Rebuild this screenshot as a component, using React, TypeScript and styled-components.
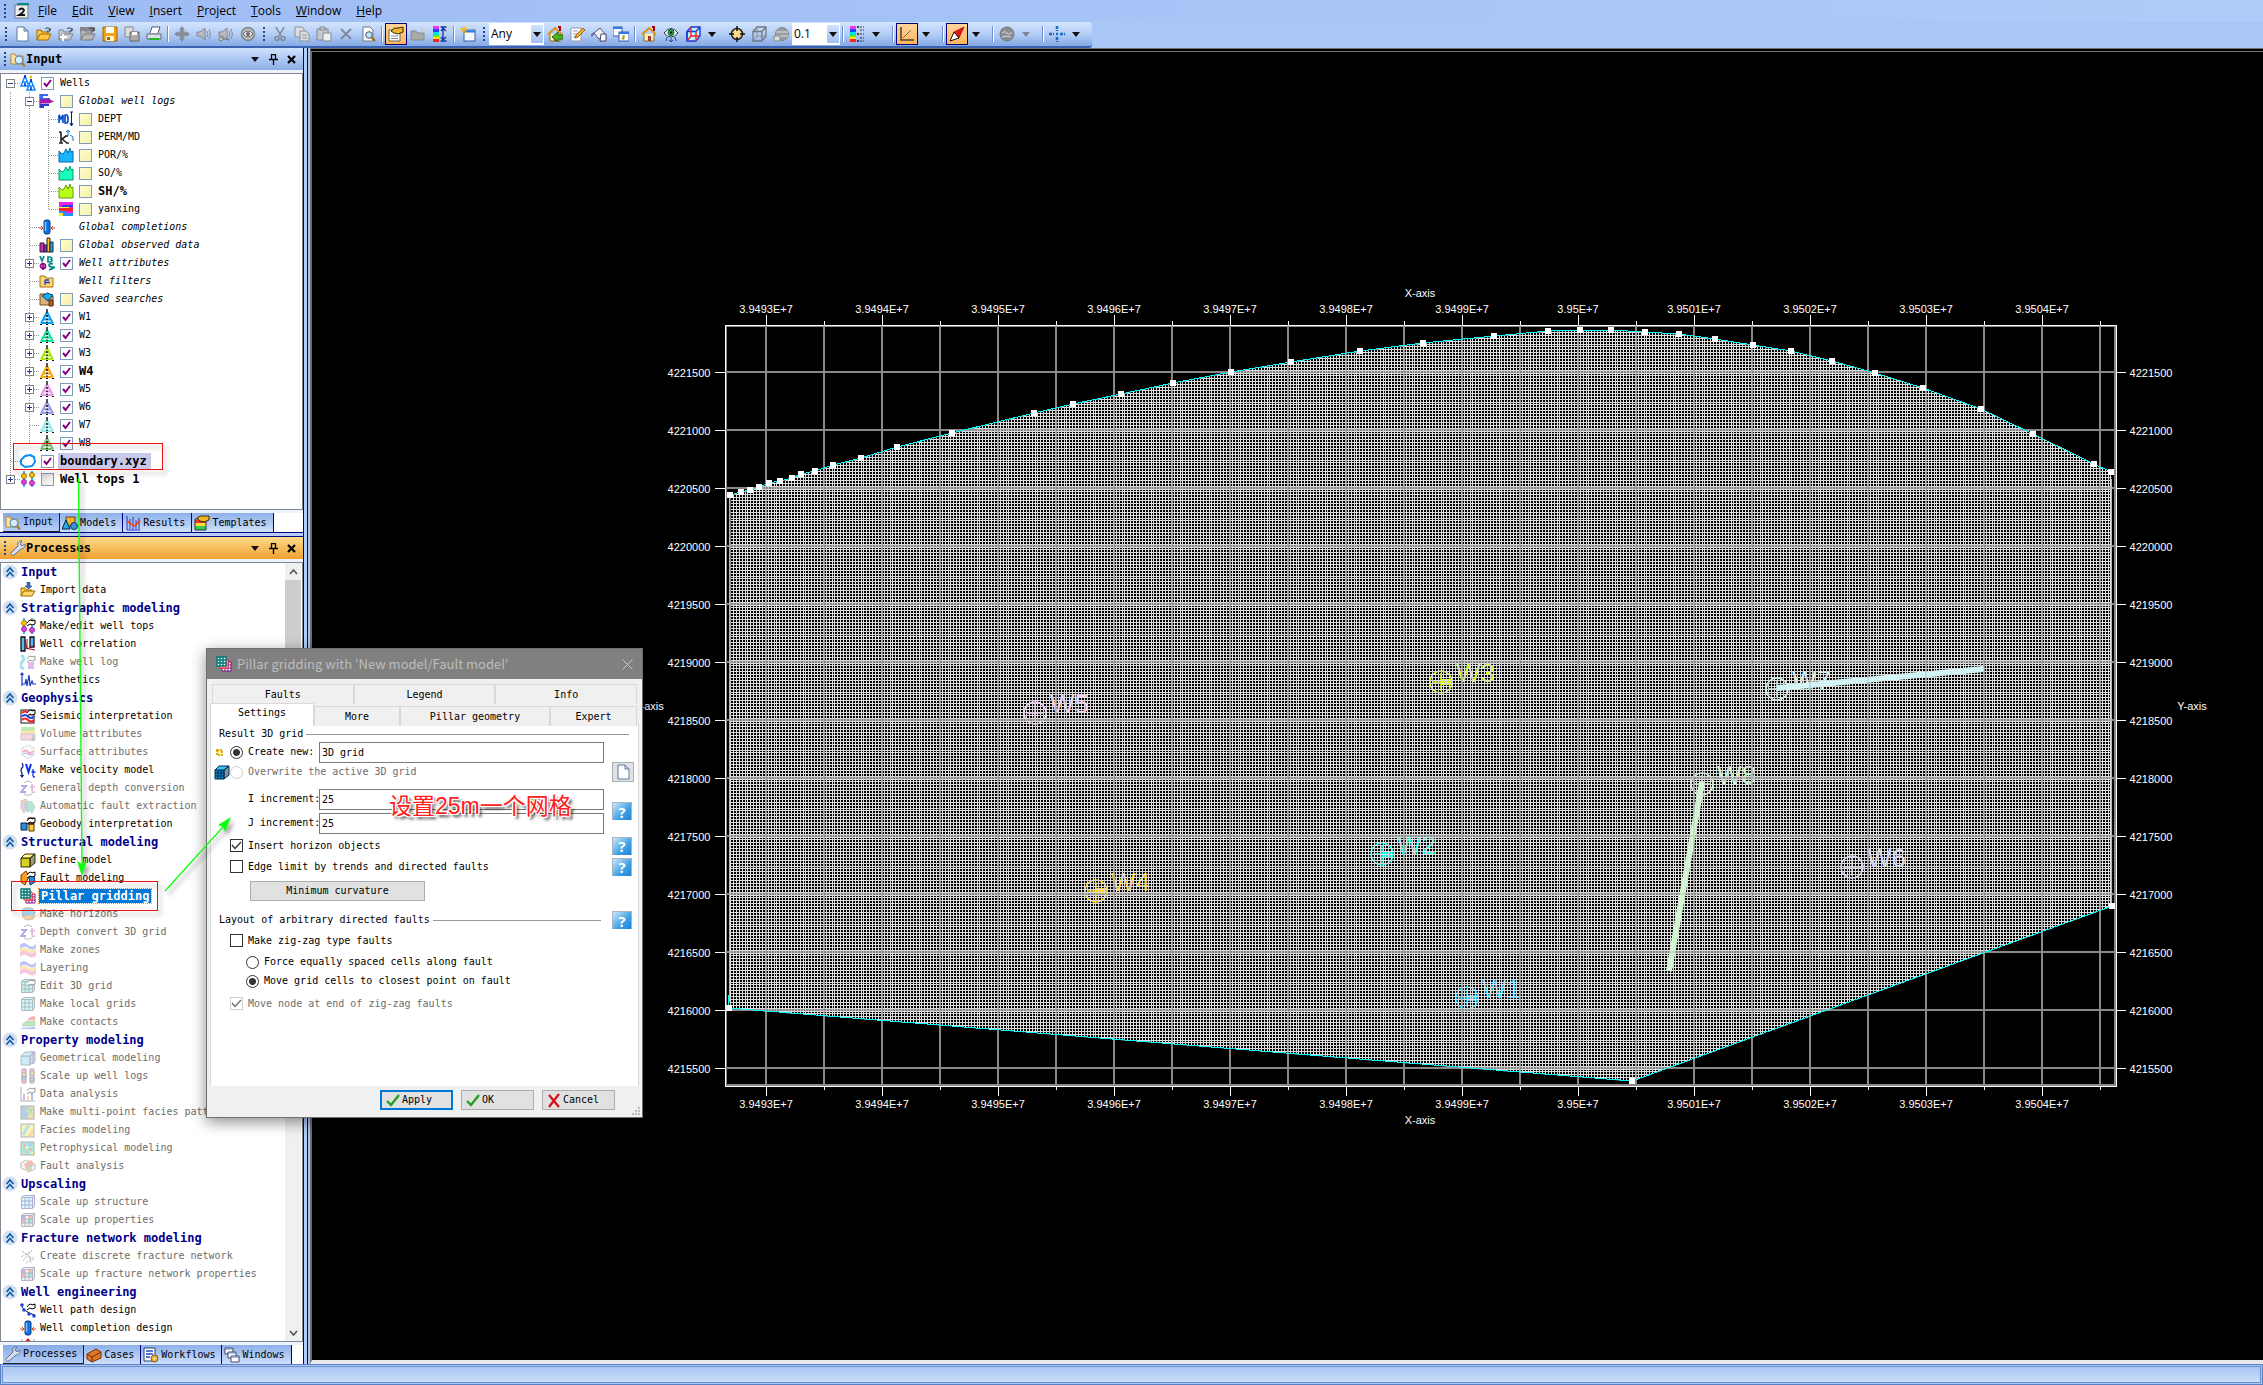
import React from "react";
import styled, { createGlobalStyle, css } from "styled-components";

const MONO = `"DejaVu Sans Mono", "Liberation Mono", monospace`;
const UI = `"Open Sans", "Noto Sans", sans-serif`;

const Global = createGlobalStyle`
  *, *::before, *::after { box-sizing: border-box; }
  body { margin: 0; background: #a9c6f6; font-family: ${MONO}; font-size: 10px; color: #000; }
  button, input, select { font: inherit; color: inherit; margin: 0; padding: 0; }
`;

/* ---------- icons ---------- */

const derrick = (c: string) => (
  <g fill="none" stroke={c} strokeWidth="2">
    <path d="M8 3 2 14.500M8 3l6 11.500M6 7h4M4.500 10.500h7M2.500 14h11" />
    <path d="M8 0v4M8 6v2M8 9.500v1.500M8 12.500v1.500" stroke="#111" strokeWidth="1.400" />
    <path d="M1 15.500h2M7 15.500h2M13 15.500h2" stroke="#111" strokeWidth="1" />
  </g>
);
const curve = (c: string, d: string) => (
  <path d="M1 15V4l3 3 2-1 2-4 2 4 2-5 1 4 2-1v11Z" fill={c} stroke={d} />
);
const folder = (a = "#ffd66b", b = "#a87410") => (
  <path d="M1 14V3h5l1 2h7v9Z" fill={a} stroke={b} />
);
const openFolder = (a: string, b: string) => (
  <>
    <path d="M1 14V4h4l1 2h6v3" fill={a} stroke={b} />
    <path d="m1 14 3-6h11l-3 6Z" fill={a} stroke={b} />
    <path d="M9 3c2-2 4-1 5 1m0-2v3h-3" fill="none" stroke="#333" />
  </>
);
const pins = (
  <g>
    <path d="M4 0v16M12 0v16" stroke="#00a0ff" strokeWidth="1.500" />
    <circle cx="4" cy="5" r="2.600" fill="#ffc400" stroke="#805500" strokeWidth=".6" />
    <circle cx="12" cy="4" r="2.600" fill="#ffc400" stroke="#805500" strokeWidth=".6" />
    <circle cx="4" cy="11" r="2.600" fill="#e040e0" stroke="#701070" strokeWidth=".6" />
    <circle cx="12" cy="12" r="2.600" fill="#e040e0" stroke="#701070" strokeWidth=".6" />
  </g>
);
const hand = <path d="M7 5c1-2 3-3 4-3l1 1 3-1v4l-3 1-2-1-3 2" fill="#fff" stroke="#000" />;
const completion = (
  <>
    <rect x="5" y="1" width="6" height="14" rx="2" fill="#1070e0" stroke="#023a80" />
    <path d="M6.500 3v9" stroke="#7fc4ff" strokeWidth="1.500" />
    <path d="M0 9h4M2 7l2 2-2 2M16 9h-4M14 7l-2 2 2 2" stroke="#e04a10" fill="none" />
  </>
);
const magnifier = (
  <>
    <path d="M1 13V3h4l1 2h7v8Z" fill="#ffe39a" stroke="#b08a3a" />
    <circle cx="9" cy="9" r="3.800" fill="#d4efff" stroke="#6b8fb5" strokeWidth="1.300" />
    <path d="m12 12 3 3.500" stroke="#b0782a" strokeWidth="2" />
  </>
);
const wrench = (
  <path d="M1 13 8 6C7 3 9 0 12 1l-2 3 2 2 3-2c1 3-2 5-4 5l-7 6c-2 1-4-1-3-2Z" fill="#d6e0ee" stroke="#60708a" />
);
const cube = (f: string, s: string, t = f) => (
  <g stroke={s}>
    <path d="M1 6h9v9H1Z" fill={f} />
    <path d="m1 6 4-4h10l-5 4Z" fill={t} />
    <path d="M10 15V6l5-4v9Z" fill={s} fillOpacity=".5" />
  </g>
);
const lattice = (f: string, s: string, many?: boolean) => (
  <g stroke={s} strokeWidth="1">
    <path d="M1.500 3.500h11v11h-11Z" fill={f} />
    <path d="m1.500 3.500 2-2h11v11l-2 2v-11Zm11 0 2-2" fill={f} />
    {many && (
      <g stroke="none">
        <path d="M2 4h3v3H2Z" fill="#8a3be0" /><path d="M6 4h3v3H6Z" fill="#ff9" /><path d="M9 4h3v3H9Z" fill="#f55" />
        <path d="M2 7h3v4H2Z" fill="#f44" /><path d="M6 7h3v4H6Z" fill="#4df" /><path d="M9 7h3v4H9Z" fill="#3c6" />
      </g>
    )}
    <path d="M5 3v11M9 3v11M2 7h11M2 11h11" fill="none" />
  </g>
);
const pillar = (
  <g fill="#fff">
    <path d="M6 6h9v9H6Z" stroke="#80107a" /><path d="M9 6v9M12 6v9M6 9h9M6 12h9" stroke="#80107a" />
    <path d="M4 4h8v8H4Z" stroke="#f22" /><path d="M7 4v8M10 4v8M4 8h8" stroke="#f22" />
    <path d="M1 1h9v9H1Z" stroke="#077" strokeWidth="1.400" /><path d="M4 1v9M7 1v9M1 4h9M1 7h9" stroke="#077" strokeWidth="1.400" />
  </g>
);
const layers = (
  <>
    <path d="M0 3q4-4 8 0t8-1v4q-4 3-8 0T0 7Z" fill="#5570f0" />
    <path d="M0 7q4-3 8 0t8-1v4q-4 3-8 0t-8 0Z" fill="#ffc830" />
    <path d="M0 10q4-3 8 0t8-1v5q-4 3-8 0t-8 1Z" fill="#e878b0" />
  </>
);
const zt = (
  <>
    <path d="M1 6h5l-5 6h5" stroke="#4030c0" strokeWidth="2" fill="none" />
    <path d="M12 4v7q0 2 3 1M10 7h5" stroke="#c040a0" strokeWidth="1.600" fill="none" />
    <path d="M4 3q4-4 8 0M12 14q-4 3-8 0" stroke="#555" fill="none" />
  </>
);
const seismic = (
  <>
    <rect x="1" y="2" width="13" height="13" fill="#fff" stroke="#111" />
    <path d="M2 5q3-3 6 0t6 0M2 12q3-3 6 0t6 0" stroke="#e22" strokeWidth="2" fill="none" />
    <path d="M2 8.500q3-3 6 0t6 0" stroke="#24d" strokeWidth="2" fill="none" />
  </>
);
const fault = (
  <>
    <path d="M1 5 6 1l3 5-4 9-4-3Z" fill="#ff9d20" stroke="#7a3c00" />
    <path d="m9 7 5-3 1 8-5 3Z" fill="#2a8de0" stroke="#023a80" />
    {hand}
  </>
);
const house = (
  <>
    <path d="M3 8v7h10V8" fill="#fff3b0" stroke="#8a6a20" />
    <path d="M1 8.500 8 2l7 6.500" stroke="#e0901a" strokeWidth="2" fill="none" />
    <path d="M11 1h2v4" stroke="#a00" strokeWidth="2" fill="none" /><path d="M7 10h3v5H7Z" fill="#a33" />
  </>
);
const wireCube = (a: string, b: string, f: string) => (
  <g fill="none">
    <path d="M2 5.500 6 1h9v9l-4 5H2Z" fill={f} stroke={a} strokeWidth="1.300" />
    <path d="M2 5.500h9V15M11 5.500 15 1" stroke={a} strokeWidth="1.300" /><path d="M6 1v9h9M6 10l-4 5" stroke={b} />
  </g>
);
const spectrum = (
  <>
    <path d="M1 0h6v3H1Z" fill="#e3e" /><path d="M1 3h6v3H1Z" fill="#24f" /><path d="M1 6h6v3H1Z" fill="#0dd" />
    <path d="M1 9h6v3H1Z" fill="#5e2" /><path d="M1 11h6v2H1Z" fill="#fe0" /><path d="M1 13h6v3H1Z" fill="#f22" />
  </>
);
const speaker = (
  <>
    <path d="M1 6h3l5-4v12l-5-4H1Z" fill="#bbb" stroke="#808890" />
    <path d="M11 5q2 3 0 6M13 3q3 5 0 10" fill="none" stroke="#909090" />
  </>
);

const ICONS: Record<string, React.ReactNode> = {
  app: <><rect x="1" y="2" width="13" height="13" fill="#eee" stroke="#777" /><path d="M3 1h12" stroke="#0a8a8a" strokeWidth="2" /><path d="M5 7q3-3 5 0 0 2-5 5h6" fill="none" stroke="#111" strokeWidth="1.800" /></>,
  newDoc: <path d="M3 1h7l4 4v10H3Z M10 1v4h4" fill="#fff" stroke="#5c7ba5" />,
  open: openFolder("#ffc845", "#a06c00"),
  openGray: <>{openFolder("#c8ccd0", "#7d838a")}<path d="M5 8v7M2 11h7" stroke="#fff" strokeWidth="2" /></>,
  folderDark: <><path d="M0 1h15v4H0Z" fill="#888" />{openFolder("#b8b8b8", "#777")}</>,
  save: <><path d="M1 1h14v14H1Z" fill="#f0a412" stroke="#a86400" /><path d="M4 1h8v6H4Z" fill="#fff" /><path d="M4 10h8v5H4Z" fill="#fff4d0" /><path d="M5 11h3v3H5Z" fill="#a86400" /></>,
  copySave: <><path d="M1 1h8v10H1Z" fill="#ddd" stroke="#888" /><path d="M6 6h9v9H6Z" fill="#aaa" stroke="#666" /><path d="M8 6h5v3H8Z" fill="#fff" /></>,
  print: <><path d="M4 7 6 1h8l-2 6" fill="#fff" stroke="#557" /><path d="M1 8h14v5H1Z" fill="#d8dfe8" stroke="#667" /><path d="M3 13h10" stroke="#2b2" strokeWidth="2" /></>,
  diamond: <path d="m8 0 3 4H9l3 3V5l4 3-4 3V9l-3 3h2l-3 4-3-4h2L4 9v2L0 8l4-3v2l3-3H5Z" fill="#858c96" />,
  speaker,
  speakerKey: <>{speaker}<circle cx="3" cy="13" r="2" fill="#ccc" stroke="#777" /><path d="M5 13h6v2" stroke="#777" fill="none" /></>,
  target2: <><circle cx="8" cy="8" r="6.500" fill="#bbb" stroke="#808890" strokeWidth="1.500" /><path d="M3 8q5-6 10 0-5 6-10 0Z" fill="#eee" stroke="#666" /><circle cx="8" cy="8" r="2" fill="#666" /></>,
  cut: <g stroke="#7d8894" fill="none" strokeWidth="1.500"><path d="m4 1 5 9M12 1 7 10" /><circle cx="5" cy="12.500" r="2" /><circle cx="11" cy="12.500" r="2" /></g>,
  copy: <g fill="#ddd" stroke="#8a929c"><path d="M1 1h7l2 2v8H1Z" /><path d="M6 5h6l3 3v7H6Z" /><path d="M8 9h5M8 12h5" /></g>,
  paste: <g fill="#c4c8cc" stroke="#808890"><path d="M1 3h11v11H1Z" /><path d="M4 1h5v3H4Z" /><path d="M7 7h8v8H7Z" fill="#eee" /></g>,
  del: <path d="m3 3 10 10M13 3 3 13" stroke="#7d8894" strokeWidth="1.800" />,
  preview: <><path d="M3 1h7l3 3v11H3Z" fill="#fff" stroke="#778" /><circle cx="9" cy="9" r="3.300" fill="#bde4ff" stroke="#456" /><path d="m11 11 4 4" stroke="#a60" strokeWidth="2" /></>,
  inspect: <><path d="M1 4h11v11H1Z" fill="#fff" stroke="#665" /><path d="M3 10h7M3 12.500h7" stroke="#889" /><path d="M3 5q3-4 7-3l5-1v5l-5 2-4-1Z" fill="#f0b429" stroke="#3a2b00" /></>,
  folderStar: <><path d="M1 14V5h5l1 2h7v7Z" fill="#aaa" stroke="#888" /><path d="M10 4h6M13 1v6M11 2l4 4M15 2l-4 4" stroke="#ccc" /></>,
  spectrumI: <>{spectrum}<path d="M11 2v12M8.500 1h6M8.500 15h6M9 5l2-3 3 3M9 11l2 3 3-3" fill="none" stroke="#1238a0" strokeWidth="1.300" /></>,
  windowStar: <><rect x="4" y="4" width="11" height="11" fill="#f4f8ff" stroke="#2f5ea8" /><path d="M4 5.500h11" stroke="#2f7ae0" strokeWidth="2" /><path d="M0 3.500h8M4 0v8M1 1l6 6M7 1 1 7" stroke="#f8b400" /></>,
  homeArrow: <>{house}<path d="M16 9h-5V6l-6 5 6 5v-3h5Z" fill="#4bb522" stroke="#1d6b00" /></>,
  edit: <><path d="M2 2h10v13H2Z" fill="#fff" stroke="#99a" /><path d="M4 5h5M4 8h5M4 11h5" stroke="#99c" /><path d="m6 12 1-3 7-7 2 2-7 7Z" fill="#f0b030" stroke="#803c00" strokeWidth=".7" /></>,
  bucket: <><path d="m3 7 6-5 5 6-6 5Z" fill="#eef3fa" stroke="#557" /><path d="M3 7 0 10" stroke="#66a" strokeWidth="2" /><path d="M10 8h5v7h-6Z" fill="#fff" stroke="#446" /></>,
  windows2: <><rect x="0" y="1" width="9" height="9" fill="#fff" stroke="#2f5ea8" /><path d="M0 2h9" stroke="#2f7ae0" strokeWidth="2" /><rect x="6" y="6" width="10" height="9" fill="#fff" stroke="#2f5ea8" /><path d="M6 7h10" stroke="#2f7ae0" strokeWidth="2" /><path d="M11 9v4h-2Z" fill="#dd0" stroke="#990" /></>,
  home: house,
  eye: <><path d="M1 7q7-9 14 0-7 8-14 0Z" fill="#fff" stroke="#333" /><circle cx="8" cy="6.500" r="3" fill="#2a9a4a" stroke="#063" /><circle cx="8" cy="6.500" r="1" /><path d="m4 11-1 4M8 12v4m-2-2 2 2 2-2M12 11l1 4" stroke="#2246a8" fill="none" /></>,
  cubeRB: (
    <g fill="none" strokeWidth="1.400">
      <path d="M2 5.500 6 1h9v9l-4 5H2Z" fill="#bff4ff" stroke="#1a35d8" />
      <path d="M2 5.500h9M11 5.500 15 1M2 5.500V15" stroke="#1a35d8" /><path d="M11 5.500V15M6 1v9h9M6 10l-4 5" stroke="#e22" />
    </g>
  ),
  cubeGray: wireCube("#707880", "#888", "none"),
  target: <><circle cx="8" cy="8" r="5.500" fill="#fbd98a" stroke="#222" strokeWidth="1.500" /><path d="M8 0v5M8 11v5M0 8h5M11 8h5" stroke="#111" strokeWidth="1.500" /></>,
  sphereLock: <><circle cx="9" cy="8" r="6.500" fill="#9a9ea4" stroke="#788" /><path d="M3 6h12M3 10h12" stroke="#ddd" /><path d="M1 10h6v5H1Z" fill="#ddd" stroke="#888" /></>,
  legend: <>{spectrum}<path d="M8 1h2M8 8h2M8 15h2" stroke="#111" strokeWidth="1.500" /><path d="M11 1h4M11 4h4M11 8h4M11 12h4M11 15h4" stroke="#333" strokeDasharray="2 1" /></>,
  axes: <><path d="M2 1v13h13" fill="none" stroke="#443" strokeWidth="1.500" /><path d="m4 12 8-8M5 13v2M8 13v2M11 13v2M14 13v2" stroke="#765" /></>,
  compass: <><path d="M15 1 10 12 5 6Z" fill="#e11" stroke="#700" strokeWidth=".6" /><path d="M5 6 1 15l9-3Z" fill="#fff" stroke="#111" /></>,
  ball: <><circle cx="8" cy="8" r="7" fill="#8a8e92" stroke="#777" /><path d="M3 7q3-3 5 0t5-1M3 11q4-2 9 0" stroke="#ddd" fill="none" /></>,
  cross: <path d="M8 0v5M8 11v5M0 8h5M11 8h5M7 8h2" stroke="#1a6ac8" strokeWidth="2.500" strokeDasharray="3 1" />,
  magnifier,
  wrench,
  wells: <g fill="none" stroke="#0a8cff" strokeWidth="1.500"><path d="M5 1 1 11h8ZM3 7h4M11 5 7 15h8ZM9 11h4" /><path d="M5 0v3M11 4v3M5 8v3M11 12v3" stroke="#0020c0" /><circle cx="11" cy="2" r="1.300" fill="#ffb000" stroke="none" /></g>,
  logs: <><path d="M1 1v14" stroke="#222" /><path d="M1 1h8v2h-5v2h7v3H1Z" fill="#3b6af0" /><path d="M1 6h9l5 2.500-5 2H1Z" fill="#a01ab0" /><path d="M1 11h9v2H5v2H1Z" fill="#2a3cc8" /></>,
  md: <><path d="M1 12V4l2 4 2-4v8M7 4v8h2l1-2V6L9 4Z" fill="none" stroke="#0a50c8" strokeWidth="1.700" /><path d="M13.500 1v14M12 1h3M12 12l1.500 3 1.500-3" stroke="#021c80" fill="none" /></>,
  perm: <><path d="M3 3v11M1 3h2M1 14h4M8 7 4 10l5 4M7 7h3M8 14h3" fill="none" stroke="#222" strokeWidth="1.600" /><path d="M10 7V1M8 3l2-2 2 2M12 6l3 2v4" fill="none" stroke="#0a70c8" /></>,
  por: curve("#18b4ff", "#0868a0"),
  so: curve("#18ffc0", "#089868"),
  sh: curve("#b8ff18", "#6a9808"),
  facies: <><rect x="1" y="1" width="14" height="14" fill="#f020e0" /><path d="M1 7h14v3H1Z" fill="#f22" /><path d="M1 10h6v2h8v3H1Z" fill="#2a90f8" /><path d="M4 4h11v2H4Z" fill="#2a40e8" /><path d="M1 6h10v1H1ZM1 12h4v3H1Z" fill="#fe3" /></>,
  completion,
  bars: <g stroke="#222"><path d="M1 6h4v9H1Z" fill="#e020c0" /><path d="M5 8h3v7H5Z" fill="#7a2ae0" /><path d="M8 1h3v14H8Z" fill="#ffc020" /><path d="M11 5h3v10h-3Z" fill="#20a0ff" /></g>,
  attrs: <g fill="none" strokeWidth="1.700"><path d="m1 1 2 5 2-5M9 2v5h3q2-2 0-2.500Q14 3 11 2Z" stroke="#088" /><circle cx="4" cy="11" r="2.500" stroke="#808" /><path d="M4 8v7" stroke="#808" /><path d="M14 9q-4-1-4 1t4 2-4 3" stroke="#088" /></g>,
  filter: <>{folder()}<path d="M6 7v5M6 7h4M6 9.500h5" stroke="#2040d0" fill="none" strokeWidth="1.300" /></>,
  search: <>{folder("#d9b27a", "#7a4a10")}<path d="m3 5 5-3 6 2-5 6Z" fill="#18a8f0" stroke="#046" /><path d="M10 9h4v6h-4Z" fill="#b06020" stroke="#532" /></>,
  d1: derrick("#08a0f0"), d2: derrick("#08e0a0"), d3: derrick("#a8e808"), d4: derrick("#f8a808"),
  d5: derrick("#e898e8"), d6: derrick("#9898e8"), d7: derrick("#90e8e8"), d8: derrick("#78c878"),
  polygon: <path d="M5 3 10 2l4 2 1 5-3 4-7 1-4-3V7Z" fill="#fff" stroke="#0a90f0" strokeWidth="2" strokeLinejoin="round" />,
  pins,
  models: <><path d="M4 2h9v9H4Z" fill="#f0b429" stroke="#543" /><path d="m4 5 4 9H0Z" fill="#28b0e8" stroke="#024" /><circle cx="12" cy="11" r="3.500" fill="#3a8fe0" stroke="#136" /></>,
  results: <><path d="M2 1v14h13M5 4v10M8 2v12M11 5v9M14 3v11" stroke="#1a30c0" fill="none" /><path d="m2 6 4 3 4 2 5-6" stroke="#f04a10" strokeWidth="1.800" fill="none" /></>,
  templates: <><path d="M1 5h11v3H1Z" fill="#e33" /><path d="M1 8h11v3H1Z" fill="#fd3" /><path d="M1 11h11v4H1Z" fill="#3c5" /><path d="M1 4h11v11H1Z" fill="none" stroke="#333" /><path d="M3 3q4-3 7-2l5 0v4l-5 2-4-1Z" fill="#f0b429" stroke="#3a2b00" /></>,
  importI: <><path d="M1 14V6h4l1 2h6v2" fill="#ffc845" stroke="#a06c00" /><path d="m1 14 3-5h11l-3 5Z" fill="#ffd66b" stroke="#a06c00" /><path d="M7 0h3v4h2L8.500 7 5 4h2Z" fill="#3a70d8" stroke="#134" strokeWidth=".5" /></>,
  wellTops: <>{pins}{hand}</>,
  correlation: <g fill="none"><path d="M1 1h4v14H1ZM10 1h4v10h-4Z" fill="#58b8f8" stroke="#111" strokeWidth="1.300" /><path d="m5 4 2 9 8-4M5 12l10 2M7 3v9" stroke="#a01020" /></g>,
  wellLog: <><path d="M1 1q5 3 1 7t2 7" stroke="#20b8d8" strokeWidth="3" fill="none" /><path d="M8 8h6v7H8Z" fill="#c050d0" />{hand}</>,
  synth: <path d="M2 1v13m-1.500-11L2 1l1.500 2M2 12h3l1-5 1 7 2-11 1 11 2-5 1 3h3" fill="none" stroke="#1a38c0" strokeWidth="1.200" />,
  seismic: <>{seismic}{hand}</>,
  volume: <><path d="M1 1h14v4H1Z" fill="#6c4" /><path d="M1 5h14v3H1Z" fill="#fb3" /><path d="M1 8h14v6H1Z" fill="#e8a0b8" stroke="#778" /><path d="M13 9v6m-2-2 2 2 2-2" stroke="#444" fill="none" /></>,
  surface: <><path d="m8 1 6 3v7l-6 4-6-4V4Z" fill="#eee" stroke="#777" strokeDasharray="2 1" /><path d="M3 8q3-3 5 0t5-1" stroke="#e34" strokeWidth="2" fill="none" /><path d="M3 10q3-2 5 0t5 0" stroke="#44e" fill="none" /></>,
  velocity: <><path d="M2 1q2 3 0 5t0 5v4m-1.500-2L2 15l1.500-2" stroke="#021c80" fill="none" strokeWidth="1.200" /><path d="m6 2 2.500 8L11 2" stroke="#1030f0" strokeWidth="2" fill="none" /><path d="M13 7v7q0 1 2 1M11.500 10h4" stroke="#1030f0" strokeWidth="1.300" fill="none" /></>,
  zt,
  autoFault: <><path d="M1 3 6 1l2 8-4 6-3-5Z" fill="#f08a60" stroke="#877" /><path d="m7 3 5 1 3 5-3 6-5-4Z" fill="#40c890" stroke="#688" /><path d="m4 5 4 9" stroke="#38f" strokeWidth="2" /></>,
  geobody: <><path d="M1 7h6v7H1Z" fill="#2a8de0" stroke="#024" /><path d="M9 8h5v7H9Z" fill="#fc3" stroke="#530" /><path d="M8 2h6v6H8Z" fill="#a04a10" stroke="#310" />{hand}</>,
  define: cube("#d8d020", "#333300", "#fff890"),
  fault,
  pillar,
  horizons: <><path d="M2 4q4-4 11-1l2 4-4 4-8-1Z" fill="#38a8e0" stroke="#356" /><path d="m2 10 4 4 7-1 2-4" fill="#f0a030" stroke="#853" /></>,
  layers,
  editGrid: <>{lattice("#6fe0d0", "#356")}{hand}</>,
  localGrid: lattice("#90f0f0", "#356"),
  contacts: <><path d="m1 14 14-1v2H1Z" fill="#46e" /><path d="M3 10q2-3 5-3h7v5H2Z" fill="#5c5" stroke="#353" strokeWidth=".5" /><path d="M7 6q3-4 8-4v4Z" fill="#e44" /></>,
  geom: <>{cube("#7fd0ff", "#456")}<path d="M13 2v11M11 2h4M11 13h4" stroke="#24a" /></>,
  scaleLogs: <g stroke="#444"><path d="M2 1h4v14H2ZM10 1h4v14h-4Z" fill="#f5b" /><path d="M2 5h4v3H2ZM10 4h4v3h-4Z" fill="#fc3" /><path d="M2 9h4v3H2ZM10 10h4v3h-4Z" fill="#3af" /></g>,
  analysis: <><path d="M1 1v14h14" stroke="#333" fill="none" /><path d="M3 8h2v6H3Z" fill="#c3c" /><path d="M7 10h2v4H7Z" fill="#fa2" /><path d="M11 7h2v7h-2Z" fill="#36e" />{hand}</>,
  multi: <><rect x="1" y="2" width="13" height="13" fill="#c8b040" stroke="#333" /><path d="M2 3h7l-3 4 3 3-2 4H2Z" fill="#48c" /><path d="m8 4 5 1-3 5Z" fill="#3a4" /></>,
  faciesM: <><rect x="1" y="2" width="13" height="13" fill="#f8e040" stroke="#444" /><path d="m2 12 5-9h3L4 14Z" fill="#30b8f0" /><path d="m8 14 6-9v5l-3 4Z" fill="#f09030" /></>,
  petro: <><rect x="1" y="2" width="13" height="13" fill="#3ad0a0" stroke="#444" /><path d="M3 4h3v3H3ZM9 8h3v3H9ZM5 11h3v2H5Z" fill="#f44" /><path d="M8 3h4v3H8ZM3 8h3v2H3Z" fill="#48f" /><path d="M6 6h2v3H6ZM11 12h2v2h-2Z" fill="#fe3" /></>,
  faultA: <><path d="m1 5 5-3 4 2v5l-5 3-4-2Z" fill="#eee" stroke="#555" /><path d="m4 6 7-4 3 3-6 10-2-3Z" fill="#e55" /><path d="m8 9 4-3 2 3-5 6Z" fill="#5b5" /><path d="m11 8 4-2v5l-4 2Z" fill="#ddf" stroke="#666" /></>,
  upStruct: lattice("#a8f0ff", "#3a3aa0"),
  upProps: lattice("#ddd", "#446", true),
  dfn: <path d="m2 3 12 9M3 13 12 2M1 9l9-5M6 15l8-6M9 8l2 7" stroke="#555" strokeDasharray="3 1" fill="none" />,
  path: <><path d="M1 2q2 8 14 11" fill="none" stroke="#111" /><circle cx="2" cy="3" r="1.800" fill="#24e" /><circle cx="4" cy="8" r="1.800" fill="#24e" /><circle cx="9" cy="12" r="1.800" fill="#24e" /><circle cx="14" cy="14" r="1.800" fill="#24e" />{hand}</>,
  modify: <><path d="m8 0 5 6H3Z" fill="#e11" /><path d="M2 1v14M14 1v14" stroke="#999" strokeDasharray="2 2" /><path d="M8 6v9" stroke="#e11" strokeWidth="3" /></>,
  cases: <><path d="m1 7 9-5 5 3v6l-9 4-5-3Z" fill="#e0762a" stroke="#733000" /><path d="m1 7 5 3 9-5M6 10v5" stroke="#733000" fill="none" /></>,
  workflows: <><path d="M1 1h11v13H1Z" fill="#fff" stroke="#246" /><path d="M3 4h7M3 7h7M3 10h4" stroke="#24c" strokeWidth="1.500" /><circle cx="11.500" cy="11.500" r="3.500" fill="#f0b429" stroke="#754" /><circle cx="11.500" cy="11.500" r="1" fill="#fff" /></>,
  windows: <g fill="#fff" stroke="#446"><path d="M1 1h8v6H1Z" /><path d="M4 5h8v6H4Z" /><path d="M7 9h8v6H7Z" /><path d="M1 2h8M4 6h8M7 10h8" stroke="#58c" /></g>,
  spark: <path d="M3 6h5v5H3Z" fill="#fff2a0" stroke="#e0a810" strokeWidth="2" strokeDasharray="2 1" />,
  gridCube: <>{cube("#0890d8", "#022a48", "#30c8ff")}<path d="M4 6v9M7 6v9M1 9h9M1 12h9" stroke="#022a48" /></>,
  ok: <path d="m2 9 4 4 8-10" fill="none" stroke="#22a01f" strokeWidth="2.400" />,
  no: <path d="m3 3 10 12M13 2 3 15" fill="none" stroke="#d8101c" strokeWidth="2.200" />,
};

const IconSvg = styled.svg<{ $dim?: boolean }>`
  display: block;
  flex: none;
  width: 16px;
  height: 16px;
  opacity: ${(p) => (p.$dim ? 0.4 : 1)};
`;
const Icon = ({ name, dim }: { name: string; dim?: boolean }) => (
  <IconSvg viewBox="0 0 16 16" $dim={dim} aria-hidden="true">{ICONS[name]}</IconSvg>
);

/* ---------- shell ---------- */

const Shell = styled.div`
  position: relative;
  display: grid;
  grid-template-rows: auto auto 1fr auto;
  height: 100vh;
  overflow: hidden;
`;
const MenuBar = styled.nav`
  display: flex;
  align-items: center;
  height: 22px;
  padding-left: 3px;
  gap: 8px;
  background: linear-gradient(90deg, #9ebcf4, #aecbf9);
  font: 12px/22px ${UI};
`;
const MenuList = styled.div`
  display: flex;
  gap: 15px;
`;
const MenuItem = styled.button`
  border: 0;
  background: none;
  &::first-letter { text-decoration: underline; }
`;
const Grip = styled.span<{ $w?: number }>`
  flex: none;
  width: ${(p) => p.$w || 3}px;
  height: 16px;
  background: repeating-linear-gradient(#27448c 0 2px, transparent 2px 4px) no-repeat center / 2px 15px;
`;
const ToolStrip = styled.div`
  display: flex;
  background: #a9c6f6;
`;
const ToolBar = styled.div`
  display: flex;
  align-items: center;
  height: 26px;
  padding-right: 2px;
  background: linear-gradient(#d3e5fd, #b4cef6 50%, #84a9e4);
  border-bottom: 2px solid #3a62b0;
  border-radius: 0 3px 3px 0;
`;
const ToolButton = styled.button<{ $on?: boolean }>`
  display: grid;
  place-items: center;
  flex: none;
  width: 22px;
  height: 22px;
  border: 1px solid ${(p) => (p.$on ? "#000080" : "transparent")};
  background: ${(p) => (p.$on ? "linear-gradient(#ffd49a, #ffb45c)" : "none")};
`;
const Separator = styled.span`
  flex: none;
  width: 6px;
  height: 16px;
  background: linear-gradient(90deg, #6f8fd0 50%, #fff 50%) no-repeat 2px 0 / 2px 16px;
`;
const DropButton = styled.button`
  display: grid;
  place-items: center;
  flex: none;
  width: 22px;
  height: 22px;
  padding-right: 6px;
  border: 0;
  background: none;
`;
const SelectBox = styled.span<{ $w: number }>`
  display: grid;
  grid-template-columns: 1fr 14px;
  align-items: center;
  width: ${(p) => p.$w}px;
  height: 22px;
  background: linear-gradient(#cfe1fb, #a3c0f0) no-repeat right 1px center / 12px 18px, #fff;
  font: 12px/20px ${UI};
  select {
    grid-area: 1 / 1 / 2 / 3;
    width: 100%;
    height: 22px;
    padding-left: 2px;
    border: 0;
    background: none;
    appearance: none;
  }
  svg { grid-area: 1 / 2; justify-self: center; pointer-events: none; }
`;
const Caret = ({ dim }: { dim?: boolean }) => (
  <svg width="8" height="5" aria-hidden="true"><path d="M0 0h8L4 5Z" fill={dim ? "#7b8797" : "#111"} /></svg>
);

const Body = styled.div`
  display: grid;
  grid-template-columns: 303px 7px minmax(0, 1fr);
  min-height: 0;
`;
const Dock = styled.aside`
  display: grid;
  grid-template-rows: 484fr 5px 827fr;
  min-height: 0;
  background: #eef2fa;
`;
const Splitter = styled.div<{ $v?: boolean }>`
  background: #b6cdf8;
  border: 1px solid #000080;
  ${(p) => (p.$v
    ? css`border-width: 0 1px; margin-right: 2px;`
    : css`border-width: 1px 0;`)}
`;
const Panel = styled.section`
  display: flex;
  flex-direction: column;
  min-height: 0;
`;
const PanelHead = styled.header<{ $active?: boolean }>`
  display: flex;
  align-items: center;
  flex: none;
  height: 22px;
  padding: 0 3px;
  background: ${(p) => (p.$active ? "linear-gradient(#fddc8c, #f0a030)" : "linear-gradient(#d0e2fc, #8aaee8)")};
`;
const PanelTitle = styled.h2`
  flex: 1;
  margin: 0;
  font: bold 12px/20px ${MONO};
`;
const PanelIcon = styled.span`
  margin-left: 4px;
`;
const HeadButton = styled.button`
  display: grid;
  place-items: center;
  width: 18px;
  height: 18px;
  border: 0;
  background: none;
`;
const Well = styled.div`
  display: flex;
  flex: 1;
  min-height: 0;
  margin: 3px 0;
  overflow: hidden;
  background: #fff;
  border: 1px solid #808590;
`;
const TabRow = styled.div`
  display: flex;
  flex: none;
  height: 19px;
  padding-left: 3px;
  background: #fff;
`;
const DockTab = styled.button<{ $on?: boolean }>`
  display: flex;
  align-items: center;
  gap: 2px;
  padding: 0 6px 0 2px;
  border: 0 solid ${(p) => (p.$on ? "#222" : "#000080")};
  border-width: 0 1px ${(p) => (p.$on ? "1px" : "0")} 0;
  background: linear-gradient(${(p) => (p.$on ? "#86aae6, #b4cef8" : "#8db0ea, #cfe1fc")});
  line-height: 18px;
`;

/* ---------- input tree ---------- */

const Tree = styled.div`
  flex: 1;
`;
const TreeRow = styled.div`
  display: flex;
  align-items: center;
  height: 18px;
  line-height: 18px;
`;
const DOT_V = "repeating-linear-gradient(#999 0 1px, transparent 1px 2px)";
const DOT_H = "repeating-linear-gradient(90deg, #999 0 1px, transparent 1px 2px)";
const Guide = styled.span<{ $line: "full" | "half" | "none"; $join?: boolean }>`
  display: grid;
  place-items: center;
  flex: none;
  width: 19px;
  height: 18px;
  background:
    ${DOT_V} no-repeat 9px 0 / 1px ${(p) => (p.$line === "full" ? 18 : p.$line === "half" ? 9 : 0)}px,
    ${DOT_H} no-repeat 10px 9px / ${(p) => (p.$join ? 9 : 0)}px 1px;
`;
const Expander = styled.button`
  display: block;
  width: 9px;
  height: 9px;
  border: 0;
  background: none;
  svg { display: block; }
`;
const TreeCheck = styled.input<{ $tone: "gray" | "yellow" }>`
  appearance: none;
  flex: none;
  width: 13px;
  height: 13px;
  margin-left: 5px;
  border: 1px solid #7f9db9;
  background: ${(p) => (p.$tone === "yellow" ? "linear-gradient(135deg, #fffcd0, #f6f0a8)" : "linear-gradient(135deg, #dcdcdc, #f8f8f8)")};
  &:checked {
    background-image: url("data:image/svg+xml,%3Csvg xmlns='http://www.w3.org/2000/svg' viewBox='0 0 11 11'%3E%3Cpath d='M2 5l2.500 3L9 2' fill='none' stroke='%23800080' stroke-width='2'/%3E%3C/svg%3E");
  }
`;
const NoCheck = styled.span`
  flex: none;
  width: 18px;
`;
const TreeText = styled.label<{ $style?: string; $sel?: boolean }>`
  margin-left: 4px;
  padding: 0 ${(p) => (p.$sel ? 4 : 1)}px 0 2px;
  line-height: 16px;
  white-space: nowrap;
  ${(p) => p.$style === "i" && css`font-style: italic;`}
  ${(p) => p.$style === "b" && css`font-weight: bold; font-size: 12px;`}
  ${(p) => p.$sel && css`background: #c8c8ea;`}
`;

type Node = { t: string; l: number; i: string; c?: "on" | "off" | "yoff" | "yon"; s?: string; x?: "+" | "-"; last?: boolean; sel?: boolean };
const NODES: Node[] = [
  { t: "Wells", l: 0, i: "wells", c: "on", x: "-" },
  { t: "Global well logs", l: 1, i: "logs", c: "yoff", s: "i", x: "-" },
  { t: "DEPT", l: 2, i: "md", c: "yoff" },
  { t: "PERM/MD", l: 2, i: "perm", c: "yoff" },
  { t: "POR/%", l: 2, i: "por", c: "yoff" },
  { t: "SO/%", l: 2, i: "so", c: "yoff" },
  { t: "SH/%", l: 2, i: "sh", c: "yoff", s: "b" },
  { t: "yanxing", l: 2, i: "facies", c: "yoff", last: true },
  { t: "Global completions", l: 1, i: "completion", s: "i" },
  { t: "Global observed data", l: 1, i: "bars", c: "yoff", s: "i" },
  { t: "Well attributes", l: 1, i: "attrs", c: "yon", s: "i", x: "+" },
  { t: "Well filters", l: 1, i: "filter", s: "i" },
  { t: "Saved searches", l: 1, i: "search", c: "yoff", s: "i" },
  { t: "W1", l: 1, i: "d1", c: "on", x: "+" },
  { t: "W2", l: 1, i: "d2", c: "on", x: "+" },
  { t: "W3", l: 1, i: "d3", c: "on", x: "+" },
  { t: "W4", l: 1, i: "d4", c: "on", x: "+", s: "b" },
  { t: "W5", l: 1, i: "d5", c: "on", x: "+" },
  { t: "W6", l: 1, i: "d6", c: "on", x: "+" },
  { t: "W7", l: 1, i: "d7", c: "on" },
  { t: "W8", l: 1, i: "d8", c: "on", last: true },
  { t: "boundary.xyz", l: 0, i: "polygon", c: "on", s: "b", sel: true },
  { t: "Well tops 1", l: 0, i: "pins", c: "off", s: "b", x: "+", last: true },
];

const TreeItem = ({ n, first }: { n: Node; first: boolean }) => {
  const id = "node-" + n.t.replace(/\W/g, "-");
  return (
    <TreeRow>
      {Array.from({ length: n.l }, (_, k) => <Guide key={k} $line="full" />)}
      <Guide $line={first ? "none" : n.last ? "half" : "full"} $join>
        {n.x && (
          <Expander aria-label={n.x === "+" ? "Expand" : "Collapse"}>
            <svg width="9" height="9">
              <rect x=".5" y=".5" width="8" height="8" fill="#fff" stroke="#848484" />
              <path d={n.x === "+" ? "M2 4.500h5M4.500 2v5" : "M2 4.500h5"} stroke="#203c88" />
            </svg>
          </Expander>
        )}
      </Guide>
      <Icon name={n.i} />
      {n.c ? <TreeCheck id={id} type="checkbox" defaultChecked={n.c === "on" || n.c === "yon"} $tone={n.c[0] === "y" ? "yellow" : "gray"} /> : <NoCheck />}
      <TreeText as={n.c ? "label" : "span"} htmlFor={n.c ? id : undefined} $style={n.s} $sel={n.sel}>{n.t}</TreeText>
    </TreeRow>
  );
};

/* ---------- processes ---------- */

const ProcList = styled.div`
  flex: 1;
  min-width: 0;
  overflow: hidden;
`;
const GroupRow = styled.button`
  display: flex;
  align-items: center;
  gap: 3px;
  width: 100%;
  height: 18px;
  padding-left: 1px;
  border: 0;
  background: none;
  color: #00008b;
  font: bold 12px/18px ${MONO};
`;
const ProcRow = styled.button<{ $dim?: boolean; $sel?: boolean }>`
  display: flex;
  align-items: center;
  gap: 3px;
  width: 100%;
  height: 18px;
  padding-left: 19px;
  border: 0;
  background: none;
  line-height: 16px;
  white-space: nowrap;
  color: ${(p) => (p.$dim ? "#6d6d6d" : "#000")};
  span { padding: 0 1px; }
  ${(p) => p.$sel && css`
    font-weight: bold;
    font-size: 12px;
    span { padding: 0 2px; line-height: 14px; color: #fff; background: #0078d7; outline: 1px dotted #ff8728; }
  `}
`;
const ScrollTrack = styled.div`
  display: grid;
  grid-template-rows: 17px 1fr 17px;
  flex: none;
  width: 16px;
  margin-right: 1px;
  background: #f0f0f0;
`;
const ScrollArrow = styled.button`
  display: grid;
  place-items: center;
  border: 0;
  background: none;
`;
const ScrollThumb = styled.div`
  height: 68%;
  background: #cdcdcd;
`;

const PROCS: [string, string?, string?][] = [
  ["Input"], ["Import data", "importI"],
  ["Stratigraphic modeling"], ["Make/edit well tops", "wellTops"], ["Well correlation", "correlation"], ["Make well log", "wellLog", "d"], ["Synthetics", "synth"],
  ["Geophysics"], ["Seismic interpretation", "seismic"], ["Volume attributes", "volume", "d"], ["Surface attributes", "surface", "d"], ["Make velocity model", "velocity"], ["General depth conversion", "zt", "d"], ["Automatic fault extraction", "autoFault", "d"], ["Geobody interpretation", "geobody"],
  ["Structural modeling"], ["Define model", "define"], ["Fault modeling", "fault"], ["Pillar gridding", "pillar", "s"], ["Make horizons", "horizons", "d"], ["Depth convert 3D grid", "zt", "d"], ["Make zones", "layers", "d"], ["Layering", "layers", "d"], ["Edit 3D grid", "editGrid", "d"], ["Make local grids", "localGrid", "d"], ["Make contacts", "contacts", "d"],
  ["Property modeling"], ["Geometrical modeling", "geom", "d"], ["Scale up well logs", "scaleLogs", "d"], ["Data analysis", "analysis", "d"], ["Make multi-point facies patterns", "multi", "d"], ["Facies modeling", "faciesM", "d"], ["Petrophysical modeling", "petro", "d"], ["Fault analysis", "faultA", "d"],
  ["Upscaling"], ["Scale up structure", "upStruct", "d"], ["Scale up properties", "upProps", "d"],
  ["Fracture network modeling"], ["Create discrete fracture network", "dfn", "d"], ["Scale up fracture network properties", "upProps", "d"],
  ["Well engineering"], ["Well path design", "path"], ["Well completion design", "completion"], ["Modify well trajectory", "modify"],
];

const Chevrons = () => (
  <IconSvg viewBox="0 0 16 16" aria-hidden="true">
    <circle cx="8" cy="8" r="7.500" fill="#d5e0f0" />
    <path d="m4.500 8 3.500-4 3.500 4M4.500 12.500l3.500-4 3.500 4" fill="none" stroke="#0a5aa8" strokeWidth="1.600" />
  </IconSvg>
);

const Head = ({ title, icon, active }: { title: string; icon: string; active?: boolean }) => (
  <PanelHead $active={active}>
    <Grip />
    <PanelIcon><Icon name={icon} /></PanelIcon>
    <PanelTitle>{title}</PanelTitle>
    <HeadButton aria-label="Panel menu"><Caret /></HeadButton>
    <HeadButton aria-label="Pin"><svg width="9" height="11"><path d="M2.500 0v5M6.500 0v5M2 .5h5M0 5.500h9M4.500 6v5" stroke="#000" fill="none" strokeWidth="1.300" /></svg></HeadButton>
    <HeadButton aria-label="Close panel"><svg width="9" height="9"><path d="m1 1 7 7M8 1 1 8" stroke="#000" strokeWidth="2.200" /></svg></HeadButton>
  </PanelHead>
);
const Tabs = ({ items }: { items: [string, string][] }) => (
  <TabRow>
    {items.map(([t, i], k) => <DockTab key={t} $on={k === 0}><Icon name={i} />{t}</DockTab>)}
  </TabRow>
);

/* ---------- plot ---------- */

const View = styled.main`
  min-width: 0;
  border: solid #6f6f6f;
  border-width: 4px 0 0 2px;
  border-top-style: double;
  background: #000;
  border-bottom: 4px solid #e8e8e8;
`;
const PlotSvg = styled.svg`
  display: block;
  width: 100%;
  height: 100%;
  font: 11px "Liberation Sans", Arial, sans-serif;
`;
const StatusBar = styled.footer`
  height: 21px;
  border: 1px solid #5a7fc4;
  box-shadow: inset 0 0 0 1px #a8c4f4, inset 0 0 0 2px #6d90d0;
  background: linear-gradient(#a5c1f0, #cfe1fb);
`;

const OX = 312, OY = 52;
const L = 725, R = 2116, T = 325, B = 1086;
const STEP = 2.9;
const PTS: [number, number][] = [
  [730, 495], [741, 492], [750, 490], [759, 487], [769, 483], [780, 481], [792, 478], [801, 474], [815, 471], [833, 465], [861, 458], [897, 447], [952, 433], [1034, 413], [1073, 404], [1121, 394],
  [1173, 383], [1231, 372], [1291, 362], [1360, 351], [1423, 343], [1494, 336], [1548, 331], [1580, 330], [1611, 330], [1645, 332], [1679, 334], [1715, 339], [1753, 345], [1791, 351], [1832, 361], [1875, 373], [1923, 388], [1981, 409], [2033, 434], [2094, 464], [2111, 472],
  [2112, 906], [1632, 1081], [729, 1008],
];
const WELLS: [string, number, number, string, boolean][] = [
  ["W1", 1467, 998, "#00ccff", true], ["W2", 1382, 854, "#00ffe0", true], ["W3", 1441, 682, "#d8ff00", true], ["W4", 1096, 891, "#ffd000", true],
  ["W5", 1035, 713, "#ffc8ff", false], ["W6", 1852, 867, "#d0d0ff", false], ["W7", 1777, 689, "#c8ffff", false], ["W8", 1702, 784, "#c8ffc8", false],
];
const range = (n: number) => Array.from({ length: n }, (_, k) => k);
const finePath = () => {
  let d = "";
  for (let k = 0; 730 + k * STEP < 2113; k++) d += `M${Math.round(730 + k * STEP)} 325v760`;
  for (let k = 0; 329 + k * STEP < 1084; k++) d += `M728 ${Math.round(329 + k * STEP)}h1386`;
  return d;
};

const Plot = () => {
  const poly = PTS.map((p) => p.join(",")).join(" ");
  return (
    <PlotSvg role="img" aria-label="Map view of the 3D grid inside the boundary">
      <clipPath id="boundary"><polygon points={poly} /></clipPath>
      <g transform={`translate(${-OX} ${-OY})`}>
        <g stroke="#888" strokeWidth="2" shapeRendering="crispEdges">
          {range(24).map((k) => <path key={k} d={`M${766 + 58 * k} ${T}V${B}`} />)}
          {range(13).map((k) => <path key={k} d={`M${L} ${372 + 58 * k}H${R}`} />)}
          <rect x={L + 1} y={T + 1} width={R - L - 2} height={B - T - 2} fill="none" />
        </g>
        <g stroke="#fff" shapeRendering="crispEdges" fill="none">
          <rect x={L} y={T} width={R - L} height={B - T} />
          {range(24).map((k) => {
            const x = 766 + 58 * k, n = k % 2 ? 4 : 10;
            return <path key={k} d={`M${x} ${T}v${-n}M${x} ${B}v${n}`} />;
          })}
          {range(13).map((k) => <path key={k} d={`M${L} ${372 + 58 * k}h-10M${R} ${372 + 58 * k}h10`} />)}
        </g>
        <g fill="#fff" textAnchor="middle">
          {range(12).map((k) => {
            const t = k === 7 ? "3.95E+7" : `${(3.9493 + k * 0.0001).toFixed(4)}E+7`;
            return <React.Fragment key={k}><text x={766 + 116 * k} y="313">{t}</text><text x={766 + 116 * k} y="1108">{t}</text></React.Fragment>;
          })}
          {range(13).map((k) => <React.Fragment key={k}><text x="689" y={377 + 58 * k}>{4221500 - 500 * k}</text><text x="2151" y={377 + 58 * k}>{4221500 - 500 * k}</text></React.Fragment>)}
          <text x="1420" y="297">X-axis</text><text x="1420" y="1124">X-axis</text>
          <text x="649" y="710">Y-axis</text><text x="2192" y="710">Y-axis</text>
        </g>
        {WELLS.map(([t, x, y, c, hit]) => (
          <g key={t} fill="none" stroke={c}>
            <circle cx={x} cy={y} r="11" strokeWidth="1.500" />
            <path d={`M${x - 9} ${y}h18M${x} ${y - 9}v18`} strokeWidth="1.500" />
            {hit && <path d={`M${x} ${y}h10`} strokeWidth="6" />}
            <text x={x + 15} y={y} fill={c} stroke="none" fontSize="26">{t}</text>
          </g>
        ))}
        <path d="M1777 688 1984 669" stroke="#d0ffff" strokeWidth="6" />
        <path d="M1702 782 1669 971" stroke="#d0ffd0" strokeWidth="6" />
        <path d={finePath()} transform="translate(.5 .5)" stroke="#dcdcdc" shapeRendering="crispEdges" clipPath="url(#boundary)" />
        <g opacity=".45" stroke="#8a8a8a" strokeWidth="2" shapeRendering="crispEdges">
          {range(24).map((k) => <path key={k} d={`M${766 + 58 * k} ${T}V${B}`} />)}
          {range(13).map((k) => <path key={k} d={`M${L} ${372 + 58 * k}H${R}`} />)}
        </g>
        <g opacity=".5"><path d="M1777 688 1984 669" stroke="#d0ffff" strokeWidth="5" /><path d="M1702 782 1669 971" stroke="#d0ffd0" strokeWidth="5" /></g>
        <polygon points={poly} fill="none" stroke="#00ffff" shapeRendering="crispEdges" />
        {PTS.map(([x, y]) => <rect key={x} x={x - 3} y={y - 3} width="6" height="6" fill="#fff" />)}
      </g>
    </PlotSvg>
  );
};

/* ---------- dialog ---------- */

const Dialog = styled.section`
  position: absolute;
  left: 206px;
  top: 648px;
  width: 437px;
  border: 1px solid #707070;
  background: #f0f0f0;
  box-shadow: 0 4px 14px rgba(0, 0, 0, 0.45);
  line-height: 16px;
`;
const TitleBar = styled.header`
  display: flex;
  align-items: center;
  height: 30px;
  margin-bottom: 5px;
  padding: 0 9px;
  gap: 5px;
  background: #808080;
  color: #bdbdbd;
`;
const DialogTitle = styled.h1`
  flex: 1;
  margin: 0;
  font: 13px/28px "Noto Sans CJK SC", ${UI};
`;
const CloseButton = styled.button`
  display: grid;
  place-items: center;
  border: 0;
  background: none;
`;
const DialogTabs = styled.div<{ $cols: string; $front?: boolean }>`
  display: grid;
  grid-template-columns: ${(p) => p.$cols};
  align-items: end;
  height: ${(p) => (p.$front ? 20 : 19)}px;
  margin: 0 5px 0 ${(p) => (p.$front ? 3 : 5)}px;
`;
const DialogTab = styled.button<{ $on?: boolean }>`
  height: ${(p) => (p.$on ? 23 : 20)}px;
  padding-bottom: ${(p) => (p.$on ? 4 : 0)}px;
  border: 1px solid #d9d9d9;
  border-bottom: 0;
  background: ${(p) => (p.$on ? "#fff" : "#f0f0f0")};
`;
const Page = styled.div`
  display: flex;
  flex-direction: column;
  min-height: 363px;
  margin: 0 3px;
  padding: 2px 4px 0 3px;
  border: 1px solid #dcdcdc;
  border-width: 1px 1px 0;
  background: #fff;
`;
const Legend = styled.div`
  display: flex;
  align-items: center;
  gap: 3px;
  height: 16px;
  padding: 0 5px;
  &::after { content: ""; flex: 1; height: 1px; background: #9a9a9a; }
`;
const Row = styled.div<{ $h: number; $indent?: number; $dim?: boolean }>`
  display: flex;
  align-items: center;
  height: ${(p) => p.$h}px;
  padding-left: ${(p) => p.$indent || 0}px;
  color: ${(p) => (p.$dim ? "#6d6d6d" : "#000")};
`;
const Grow = styled.span`
  flex: 1;
`;
const FieldLabel = styled.label<{ $w?: number }>`
  width: ${(p) => (p.$w ? p.$w + "px" : "auto")};
  white-space: nowrap;
`;
const TextBox = styled.input`
  flex: 1;
  min-width: 0;
  height: 21px;
  margin-right: 30px;
  padding: 0 2px;
  border: 1px solid #7a7a7a;
  background: #fff;
`;
const Tick = styled.input`
  appearance: none;
  flex: none;
  width: 13px;
  height: 13px;
  margin-right: 5px;
  border: 1px solid #333;
  background: #fff;
  &:checked { background-image: url("data:image/svg+xml,%3Csvg xmlns='http://www.w3.org/2000/svg' viewBox='0 0 11 11'%3E%3Cpath d='M1 5l3 3.500L10 2' fill='none' stroke='%23333' stroke-width='1.400'/%3E%3C/svg%3E"); }
  &:disabled { border-color: #bbb; opacity: 0.7; }
`;
const Dot = styled.input`
  appearance: none;
  flex: none;
  width: 13px;
  height: 13px;
  margin-right: 5px;
  border: 1px solid #333;
  border-radius: 50%;
  background: #fff;
  &:checked { background: radial-gradient(circle, #333 3px, #fff 4px); }
  &:disabled { border-color: #ccc; }
`;
const HelpButton = styled.button`
  flex: none;
  width: 20px;
  height: 18px;
  margin-right: 2px;
  border: 1px solid #a8b4c4;
  border-bottom: 0;
  background: linear-gradient(135deg, #cfe8fa, #3fa0e4 60%, #1c84d8);
  color: #fff;
  font: bold 15px/16px ${UI};
`;
const PageButton = styled.button`
  display: grid;
  place-items: center;
  flex: none;
  width: 22px;
  height: 20px;
  border: 1px solid #adadad;
  background: #e1e1e1;
`;
const PlainButton = styled.button`
  width: 175px;
  height: 20px;
  border: 1px solid #adadad;
  background: #e1e1e1;
`;
const Section = styled.div`
  display: flex;
  align-items: center;
  height: 18px;
  margin-top: 7px;
  ${Legend} { flex: 1; padding-right: 11px; }
`;
const IncrementBlock = styled.div`
  display: flex;
  align-items: center;
  margin-top: 5px;
`;
const Increments = styled.div`
  flex: 1;
  margin-right: -22px;
  & + button { z-index: 1; }
`;
const Footer = styled.footer`
  display: flex;
  justify-content: flex-end;
  gap: 8px;
  height: 31px;
  padding: 4px 27px 7px;
`;
const FooterButton = styled.button<{ $main?: boolean }>`
  display: flex;
  align-items: center;
  gap: 1px;
  width: 73px;
  padding-left: 3px;
  border: ${(p) => (p.$main ? "2px solid #0078d7" : "1px solid #adadad")};
  background: #e1e1e1;
`;
const SizeGrip = styled.svg`
  position: absolute;
  right: 1px;
  bottom: 1px;
`;

const Help = () => <HelpButton aria-label="Help">?</HelpButton>;

const PillarDialog = () => (
  <Dialog role="dialog" aria-labelledby="dlg-title">
    <TitleBar>
      <Icon name="pillar" />
      <DialogTitle id="dlg-title">Pillar gridding with 'New model/Fault model'</DialogTitle>
      <CloseButton aria-label="Close"><svg width="11" height="11"><path d="m.5.5 10 10M10.500.5l-10 10" stroke="#c8c8c8" /></svg></CloseButton>
    </TitleBar>
    <DialogTabs $cols="1fr 1fr 1fr">
      {["Faults", "Legend", "Info"].map((t) => <DialogTab key={t}>{t}</DialogTab>)}
    </DialogTabs>
    <DialogTabs $cols="104px 86px 150px 1fr" $front>
      {["Settings", "More", "Pillar geometry", "Expert"].map((t, k) => <DialogTab key={t} $on={k === 0}>{t}</DialogTab>)}
    </DialogTabs>
    <Page>
      <Legend>Result 3D grid</Legend>
      <Row $h={20}>
        <Icon name="spark" />
        <Dot type="radio" name="result" id="r-new" defaultChecked />
        <FieldLabel htmlFor="r-new" $w={71}>Create new:</FieldLabel>
        <TextBox aria-label="Grid name" defaultValue="3D grid" />
      </Row>
      <Row $h={20} $dim>
        <Icon name="gridCube" />
        <Dot type="radio" name="result" id="r-over" disabled />
        <FieldLabel htmlFor="r-over">Overwrite the active 3D grid</FieldLabel>
        <Grow />
        <PageButton aria-label="New page"><Icon name="newDoc" /></PageButton>
      </Row>
      <IncrementBlock>
        <Increments>
          <Row $h={24} $indent={34}><FieldLabel htmlFor="inc-i" $w={71}>I increment:</FieldLabel><TextBox id="inc-i" defaultValue="25" /></Row>
          <Row $h={24} $indent={34}><FieldLabel htmlFor="inc-j" $w={71}>J increment:</FieldLabel><TextBox id="inc-j" defaultValue="25" /></Row>
        </Increments>
        <Help />
      </IncrementBlock>
      <Row $h={21} $indent={16}><Tick type="checkbox" id="c-hor" defaultChecked /><FieldLabel htmlFor="c-hor">Insert horizon objects</FieldLabel><Grow /><Help /></Row>
      <Row $h={21} $indent={16}><Tick type="checkbox" id="c-edge" /><FieldLabel htmlFor="c-edge">Edge limit by trends and directed faults</FieldLabel><Grow /><Help /></Row>
      <Row $h={27} $indent={36}><PlainButton>Minimum curvature</PlainButton></Row>
      <Section><Legend>Layout of arbitrary directed faults</Legend><Help /></Section>
      <Row $h={23} $indent={16}><Tick type="checkbox" id="c-zig" /><FieldLabel htmlFor="c-zig">Make zig-zag type faults</FieldLabel></Row>
      <Row $h={20} $indent={32}><Dot type="radio" name="zig" id="z-force" /><FieldLabel htmlFor="z-force">Force equally spaced cells along fault</FieldLabel></Row>
      <Row $h={18} $indent={32}><Dot type="radio" name="zig" id="z-move" defaultChecked /><FieldLabel htmlFor="z-move">Move grid cells to closest point on fault</FieldLabel></Row>
      <Row $h={27} $indent={16} $dim><Tick type="checkbox" id="c-node" defaultChecked disabled /><FieldLabel htmlFor="c-node">Move node at end of zig-zag faults</FieldLabel></Row>
    </Page>
    <Footer>
      <FooterButton $main><Icon name="ok" />Apply</FooterButton>
      <FooterButton><Icon name="ok" />OK</FooterButton>
      <FooterButton><Icon name="no" />Cancel</FooterButton>
    </Footer>
    <SizeGrip width="9" height="9" aria-hidden="true"><path d="M6 0h2v2H6ZM6 3h2v2H6ZM3 3h2v2H3ZM6 6h2v2H6ZM3 6h2v2H3ZM0 6h2v2H0Z" fill="#bbb" /></SizeGrip>
  </Dialog>
);

/* ---------- annotations ---------- */

const Marks = styled.svg`
  position: absolute;
  left: 0;
  top: 0;
  width: 660px;
  height: 100%;
  pointer-events: none;
  filter: drop-shadow(3px 4px 2px rgba(0, 0, 0, 0.35));
`;
const Note = styled.p`
  position: absolute;
  left: 389px;
  top: 790px;
  margin: 0;
  pointer-events: none;
  white-space: nowrap;
  color: #ff2020;
  font: 23px/32px "Liberation Sans", "Noto Sans CJK SC", sans-serif;
  text-shadow: 1px 0 #fff, -1px 0 #fff, 0 1px #fff, 0 -1px #fff, 1px 1px #fff, -1px -1px #fff, 1px -1px #fff, -1px 1px #fff, 3px 3px 3px rgba(0, 0, 0, 0.8);
`;

/* ---------- toolbar content ---------- */

const FILE_TOOLS = ["newDoc", "open", "openGray", "folderDark", "save", "copySave", "print"];
const Tools = ({ names, on }: { names: string[]; on?: string }) => (
  <>{names.map((n) => <ToolButton key={n} $on={n === on} aria-label={n}><Icon name={n} /></ToolButton>)}</>
);
const Drop = ({ dim }: { dim?: boolean }) => <DropButton aria-label="More options"><Caret dim={dim} /></DropButton>;

export default function App() {
  return (
    <Shell>
      <Global />
      <MenuBar>
        <Grip />
        <Icon name="app" />
        <MenuList>
          {["File", "Edit", "View", "Insert", "Project", "Tools", "Window", "Help"].map((m) => <MenuItem key={m}>{m}</MenuItem>)}
        </MenuList>
      </MenuBar>
      <ToolStrip>
        <ToolBar>
          <Grip $w={11} /><Tools names={FILE_TOOLS} />
          <Separator /><Tools names={["diamond", "speaker", "speakerKey", "target2"]} />
          <Grip $w={10} /><Tools names={["cut", "copy", "paste", "del", "preview"]} />
          <Separator /><Tools names={["inspect", "folderStar", "spectrumI"]} on="inspect" />
          <Separator /><Tools names={["windowStar"]} />
          <Grip $w={10} />
          <SelectBox $w={55}><select aria-label="Filter"><option>Any</option></select><Caret /></SelectBox>
          <Tools names={["homeArrow", "edit", "bucket", "windows2"]} />
          <Separator /><Tools names={["home", "eye", "cubeRB"]} /><Drop />
          <Tools names={["target", "cubeGray", "sphereLock"]} />
          <SelectBox $w={48}><select aria-label="Scale"><option>0.1</option></select><Caret /></SelectBox>
          <Separator /><Tools names={["legend"]} /><Drop />
          <Separator /><Tools names={["axes"]} on="axes" /><Drop />
          <Separator /><Tools names={["compass"]} on="compass" /><Drop />
          <Separator /><Tools names={["ball"]} /><Drop dim />
          <Separator /><Tools names={["cross"]} /><Drop />
        </ToolBar>
      </ToolStrip>
      <Body>
        <Dock>
          <Panel>
            <Head title="Input" icon="magnifier" />
            <Well><Tree>{NODES.map((n, k) => <TreeItem key={n.t} n={n} first={k === 0} />)}</Tree></Well>
            <Tabs items={[["Input", "magnifier"], ["Models", "models"], ["Results", "results"], ["Templates", "templates"]]} />
          </Panel>
          <Splitter />
          <Panel>
            <Head title="Processes" icon="wrench" active />
            <Well>
              <ProcList>
                {PROCS.map(([t, i, s]) => (i
                  ? <ProcRow key={t} $dim={s === "d"} $sel={s === "s"}><Icon name={i} dim={s === "d"} /><span>{t}</span></ProcRow>
                  : <GroupRow key={t}><Chevrons />{t}</GroupRow>))}
              </ProcList>
              <ScrollTrack>
                <ScrollArrow aria-label="Scroll up"><svg width="9" height="6"><path d="m1 5 3.500-4L8 5" fill="none" stroke="#555" strokeWidth="1.600" /></svg></ScrollArrow>
                <ScrollThumb />
                <ScrollArrow aria-label="Scroll down"><svg width="9" height="6"><path d="m1 1 3.500 4L8 1" fill="none" stroke="#555" strokeWidth="1.600" /></svg></ScrollArrow>
              </ScrollTrack>
            </Well>
            <Tabs items={[["Processes", "wrench"], ["Cases", "cases"], ["Workflows", "workflows"], ["Windows", "windows"]]} />
          </Panel>
        </Dock>
        <Splitter $v />
        <View><Plot /></View>
      </Body>
      <StatusBar />
      <PillarDialog />
      <Note>设置25m一个网格</Note>
      <Marks aria-hidden="true">
        <g fill="none" stroke="#f01010"><rect x="13.500" y="443.500" width="149" height="26" /><rect x="11.500" y="881.500" width="146" height="29" /></g>
        <path d="M78.500 478 82 866M165 891l58-64" stroke="#10ff10" strokeWidth="1.400" />
        <path d="m82 876-5-15 5 3 5-3ZM231 817l-6 15-2-5-5-2Z" fill="#10ff10" />
      </Marks>
    </Shell>
  );
}
